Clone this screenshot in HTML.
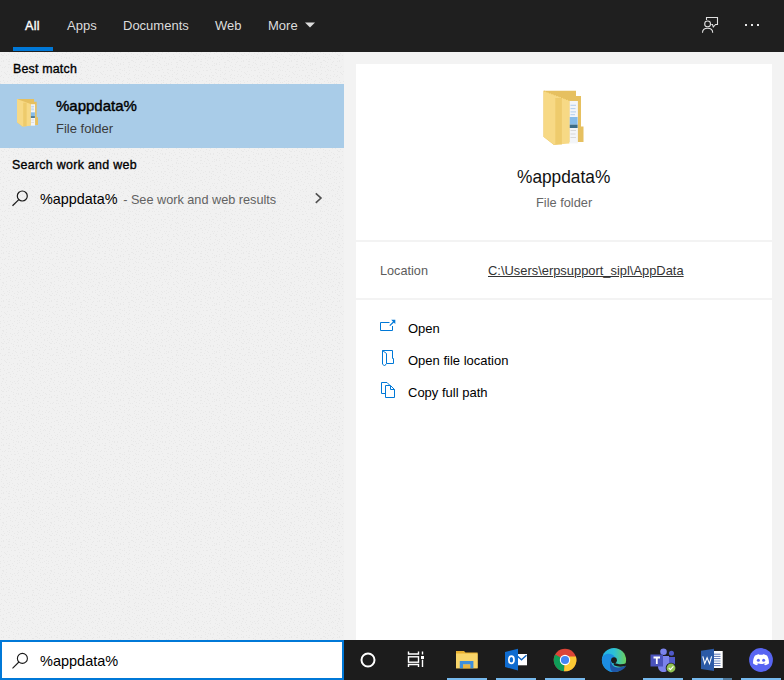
<!DOCTYPE html>
<html><head><meta charset="utf-8">
<style>
*{margin:0;padding:0;box-sizing:border-box}
html,body{width:784px;height:680px;overflow:hidden;background:#f3f3f3;font-family:"Liberation Sans",sans-serif}
.a{position:absolute;white-space:nowrap;line-height:1}
#hdr{position:absolute;left:0;top:0;width:784px;height:52px;background:#1f1f1f}
#left{position:absolute;left:0;top:52px;width:344px;height:588px;background:#efefef}
#gap{position:absolute;left:344px;top:52px;width:440px;height:588px;background:#f3f3f3}
.card{position:absolute;left:356px;width:416px;background:#fff}
#tb{position:absolute;left:0;top:640px;width:784px;height:40px;background:#1c1c1c}
.tab{color:#dcdcdc;font-size:13px}
</style></head><body>
<div id="hdr"></div>
<div id="left"></div>
<svg style="position:absolute;left:0;top:52px" width="344" height="588"><defs><pattern id="nz" width="48" height="48" patternUnits="userSpaceOnUse"><rect width="48" height="48" fill="#f1f1f1"/><path d="M1 2h1v1h-1zM4 1h1v1h-1zM8 2h1v1h-1zM9 0h1v1h-1zM14 1h1v1h-1zM17 2h1v1h-1zM18 0h1v1h-1zM22 1h1v1h-1zM24 0h1v1h-1zM29 2h1v1h-1zM32 0h1v1h-1zM35 1h1v1h-1zM37 2h1v1h-1zM41 2h1v1h-1zM44 0h1v1h-1zM47 0h1v1h-1zM2 3h1v1h-1zM3 3h1v1h-1zM6 3h1v1h-1zM11 3h1v1h-1zM13 4h1v1h-1zM16 5h1v1h-1zM18 5h1v1h-1zM21 5h1v1h-1zM25 4h1v1h-1zM27 5h1v1h-1zM30 4h1v1h-1zM35 4h1v1h-1zM37 5h1v1h-1zM39 5h1v1h-1zM43 4h1v1h-1zM45 5h1v1h-1zM1 6h1v1h-1zM3 8h1v1h-1zM6 7h1v1h-1zM9 7h1v1h-1zM13 6h1v1h-1zM15 8h1v1h-1zM18 6h1v1h-1zM21 6h1v1h-1zM25 7h1v1h-1zM29 7h1v1h-1zM31 6h1v1h-1zM35 8h1v1h-1zM36 8h1v1h-1zM40 7h1v1h-1zM42 7h1v1h-1zM46 6h1v1h-1zM1 9h1v1h-1zM3 9h1v1h-1zM8 9h1v1h-1zM9 9h1v1h-1zM13 10h1v1h-1zM15 11h1v1h-1zM20 9h1v1h-1zM22 11h1v1h-1zM24 11h1v1h-1zM27 10h1v1h-1zM32 10h1v1h-1zM33 10h1v1h-1zM37 9h1v1h-1zM39 10h1v1h-1zM44 10h1v1h-1zM45 9h1v1h-1zM0 13h1v1h-1zM5 14h1v1h-1zM8 12h1v1h-1zM9 12h1v1h-1zM12 13h1v1h-1zM16 12h1v1h-1zM20 13h1v1h-1zM22 13h1v1h-1zM24 12h1v1h-1zM27 12h1v1h-1zM32 14h1v1h-1zM33 12h1v1h-1zM38 13h1v1h-1zM40 14h1v1h-1zM43 12h1v1h-1zM47 13h1v1h-1zM2 15h1v1h-1zM4 15h1v1h-1zM8 15h1v1h-1zM10 15h1v1h-1zM14 15h1v1h-1zM17 15h1v1h-1zM18 17h1v1h-1zM23 17h1v1h-1zM24 17h1v1h-1zM28 16h1v1h-1zM32 15h1v1h-1zM34 15h1v1h-1zM36 15h1v1h-1zM39 17h1v1h-1zM43 15h1v1h-1zM47 17h1v1h-1zM1 19h1v1h-1zM4 20h1v1h-1zM7 19h1v1h-1zM11 18h1v1h-1zM14 18h1v1h-1zM15 18h1v1h-1zM19 20h1v1h-1zM23 20h1v1h-1zM26 18h1v1h-1zM28 18h1v1h-1zM30 20h1v1h-1zM33 18h1v1h-1zM37 19h1v1h-1zM40 18h1v1h-1zM42 18h1v1h-1zM45 19h1v1h-1zM1 23h1v1h-1zM5 21h1v1h-1zM6 22h1v1h-1zM9 22h1v1h-1zM13 23h1v1h-1zM17 23h1v1h-1zM20 23h1v1h-1zM21 23h1v1h-1zM24 21h1v1h-1zM28 22h1v1h-1zM32 22h1v1h-1zM33 21h1v1h-1zM38 23h1v1h-1zM39 22h1v1h-1zM42 23h1v1h-1zM46 22h1v1h-1zM0 24h1v1h-1zM3 25h1v1h-1zM8 25h1v1h-1zM11 24h1v1h-1zM14 26h1v1h-1zM17 24h1v1h-1zM19 25h1v1h-1zM21 26h1v1h-1zM25 24h1v1h-1zM28 24h1v1h-1zM31 26h1v1h-1zM33 26h1v1h-1zM38 25h1v1h-1zM40 26h1v1h-1zM42 26h1v1h-1zM45 24h1v1h-1zM0 29h1v1h-1zM3 28h1v1h-1zM7 29h1v1h-1zM10 28h1v1h-1zM14 29h1v1h-1zM17 28h1v1h-1zM19 28h1v1h-1zM23 27h1v1h-1zM26 29h1v1h-1zM27 28h1v1h-1zM32 27h1v1h-1zM34 27h1v1h-1zM36 29h1v1h-1zM39 28h1v1h-1zM44 29h1v1h-1zM46 28h1v1h-1zM0 31h1v1h-1zM4 30h1v1h-1zM8 32h1v1h-1zM9 32h1v1h-1zM12 31h1v1h-1zM17 31h1v1h-1zM19 30h1v1h-1zM22 31h1v1h-1zM26 31h1v1h-1zM27 32h1v1h-1zM31 30h1v1h-1zM33 31h1v1h-1zM36 32h1v1h-1zM40 30h1v1h-1zM42 30h1v1h-1zM46 31h1v1h-1zM0 35h1v1h-1zM3 34h1v1h-1zM6 33h1v1h-1zM10 34h1v1h-1zM13 33h1v1h-1zM16 34h1v1h-1zM20 35h1v1h-1zM22 35h1v1h-1zM25 35h1v1h-1zM29 34h1v1h-1zM31 33h1v1h-1zM33 34h1v1h-1zM38 33h1v1h-1zM41 35h1v1h-1zM43 35h1v1h-1zM46 34h1v1h-1zM2 38h1v1h-1zM3 38h1v1h-1zM6 37h1v1h-1zM10 36h1v1h-1zM12 37h1v1h-1zM15 36h1v1h-1zM18 38h1v1h-1zM21 37h1v1h-1zM24 38h1v1h-1zM29 38h1v1h-1zM32 37h1v1h-1zM33 38h1v1h-1zM36 36h1v1h-1zM40 37h1v1h-1zM42 38h1v1h-1zM45 37h1v1h-1zM2 41h1v1h-1zM3 39h1v1h-1zM6 40h1v1h-1zM10 41h1v1h-1zM14 41h1v1h-1zM17 41h1v1h-1zM18 40h1v1h-1zM23 39h1v1h-1zM24 40h1v1h-1zM29 40h1v1h-1zM30 40h1v1h-1zM34 39h1v1h-1zM38 39h1v1h-1zM40 41h1v1h-1zM44 41h1v1h-1zM47 40h1v1h-1zM1 43h1v1h-1zM5 42h1v1h-1zM6 44h1v1h-1zM11 44h1v1h-1zM12 42h1v1h-1zM15 43h1v1h-1zM18 43h1v1h-1zM23 43h1v1h-1zM25 44h1v1h-1zM27 43h1v1h-1zM32 42h1v1h-1zM33 43h1v1h-1zM37 44h1v1h-1zM40 43h1v1h-1zM43 42h1v1h-1zM45 42h1v1h-1zM1 45h1v1h-1zM3 47h1v1h-1zM7 47h1v1h-1zM9 46h1v1h-1zM12 47h1v1h-1zM17 47h1v1h-1zM20 47h1v1h-1zM22 46h1v1h-1zM26 47h1v1h-1zM27 45h1v1h-1zM31 47h1v1h-1zM35 46h1v1h-1zM38 47h1v1h-1zM41 45h1v1h-1zM44 47h1v1h-1zM47 46h1v1h-1z" fill="#e8e8e8"/></pattern></defs><rect width="344" height="588" fill="url(#nz)"/></svg>
<div id="gap"></div>
<div class="card" style="top:64px;height:176px"></div>
<div class="card" style="top:242px;height:56px"></div>
<div class="card" style="top:300px;height:340px"></div>
<div id="tb"></div>

<!-- header tabs -->
<div class="a tab" style="left:25px;top:20px;font-size:12.6px;-webkit-text-stroke:0.35px #fff;letter-spacing:0.3px;color:#fff">All</div>
<div style="position:absolute;left:13px;top:47px;width:40px;height:4px;background:#0078d7"></div>
<div class="a tab" style="left:67px;top:19px">Apps</div>
<div class="a tab" style="left:123px;top:19px">Documents</div>
<div class="a tab" style="left:215px;top:19px">Web</div>
<div class="a tab" style="left:268px;top:19px">More</div>
<svg style="position:absolute;left:304px;top:22px" width="12" height="6"><path d="M1 0.5H11L6 5.5Z" fill="#dcdcdc"/></svg>


<!-- header right icons -->
<svg style="position:absolute;left:698px;top:12px" width="26" height="26" viewBox="698 12 26 26" fill="none" stroke="#e0e0e0" stroke-width="1.1">
<path d="M706.5 20V17.5H717.5V24.5H715.5L713.3 27L712.5 24.5H711.3"/>
<circle cx="707.6" cy="23.9" r="2.9"/>
<path d="M702.5 32.8C702.5 30 704.7 28.3 707.6 28.3S712.7 30 712.7 32.8"/>
</svg>
<div style="position:absolute;left:745px;top:24px;width:2px;height:2px;background:#e6e6e6"></div>
<div style="position:absolute;left:751px;top:24px;width:2px;height:2px;background:#e6e6e6"></div>
<div style="position:absolute;left:757px;top:24px;width:2px;height:2px;background:#e6e6e6"></div>

<!-- left panel -->
<div class="a" style="left:13px;top:63px;font-size:12.4px;-webkit-text-stroke:0.35px #000;letter-spacing:0.2px;color:#000">Best match</div>
<div style="position:absolute;left:0;top:84px;width:344px;height:64px;background:#a9cce8"></div>
<svg style="position:absolute;left:17px;top:99px" width="21" height="27.5" viewBox="543.5 90.7 40 54.3" preserveAspectRatio="none">
<path d="M543.5 90.7H576V95.9H581V126.5H583.5V142H569L554 145L543.5 136.8Z" fill="#e6c060"/>
<path d="M569.4 101H577.9V143.4H569.4Z" fill="#f3f5f8"/>
<path d="M570.5 105.3H576M570.5 108.6H575.5M570.5 111.9H576" stroke="#a9c9ec" stroke-width="1.5"/>
<path d="M569.6 117H577.6V124.6H569.6Z" fill="#86bbe8"/>
<path d="M569.6 124.6H577.6V128H569.6Z" fill="#3d6c86"/>
<path d="M570.5 132H576M570.5 137H576" stroke="#d5d5d5" stroke-width="1.5"/>
<path d="M543.5 90.7L569.4 100.6V143.4L553.9 144.8L543.5 136.8Z" fill="#f7d985"/>
<path d="M558.6 98V144.5" stroke="#eecb6c" stroke-width="6.6"/>
</svg>
<div class="a" style="left:56px;top:97.5px;font-size:15px;-webkit-text-stroke:0.4px #000;color:#000">%appdata%</div>
<div class="a" style="left:56px;top:122px;font-size:13px;color:#3a3a3a">File folder</div>

<div class="a" style="left:12px;top:159px;font-size:12.4px;-webkit-text-stroke:0.35px #000;letter-spacing:0.3px;color:#000">Search work and web</div>
<svg style="position:absolute;left:10px;top:189px" width="20" height="20" viewBox="0 0 20 20" fill="none" stroke="#1a1a1a" stroke-width="1.2">
<circle cx="12.3" cy="7" r="5"/><path d="M8.8 10.6L2.5 16.8"/>
</svg>
<div class="a" style="left:40px;top:192px;font-size:14.4px;color:#000">%appdata%<span style="font-size:12.7px;color:#626262;margin-left:2px"> - See work and web results</span></div>
<svg style="position:absolute;left:310px;top:188px" width="16" height="20" viewBox="310 188 16 20" fill="none" stroke="#505050" stroke-width="1.6">
<path d="M315.8 193.3L321 198.1L315.8 202.9"/>
</svg>

<!-- right card 1 -->
<svg style="position:absolute;left:536px;top:86px" width="56" height="64" viewBox="536 86 56 64">
<path d="M543.5 90.7H576V95.9H581V126.5H583.5V142H569L554 145L543.5 136.8Z" fill="#e6c060"/>
<path d="M569.4 101H577.9V143.4H569.4Z" fill="#f3f5f8"/>
<path d="M570.5 105.3H576M570.5 108.6H575.5M570.5 111.9H576M570.5 114.7H575" stroke="#a9c9ec" stroke-width="0.9"/>
<path d="M569.6 117H577.6V124.6H569.6Z" fill="#86bbe8"/>
<path d="M569.6 124.6H577.6V128H569.6Z" fill="#3d6c86"/>
<path d="M570.5 130.5H576M570.5 134H575.5M570.5 137.5H576" stroke="#d5d5d5" stroke-width="0.9"/>
<path d="M543.5 90.7L569.4 100.6V143.4L553.9 144.8L543.5 136.8Z" fill="#f7d985"/>
<path d="M558.6 98V144.5" stroke="#eecb6c" stroke-width="6.6"/>
<path d="M544 91L569 100.5" stroke="#e2b94f" stroke-width="0.8" stroke-dasharray="1 1.6"/>
</svg>
<div class="a" style="left:517px;top:168px;font-size:18.5px;color:#111;transform:scaleX(0.935);transform-origin:0 0">%appdata%</div>
<div class="a" style="left:536px;top:197px;font-size:12.8px;color:#666">File folder</div>

<!-- right card 2 -->
<div class="a" style="left:380px;top:265px;font-size:12.7px;color:#5c5c5c">Location</div>
<div class="a" style="left:488px;top:265px;font-size:12.9px;color:#333;text-decoration:underline">C:\Users\erpsupport_sipl\AppData</div>

<!-- right card 3 actions -->
<svg style="position:absolute;left:374px;top:314px" width="26" height="22" viewBox="374 314 26 22" fill="none" stroke="#0078d7" stroke-width="1">
<path d="M389.5 322.5H380.5V330.5H392.5V326"/><path d="M389.8 325.7L394 321.5" stroke-width="1.2"/><path d="M391.2 319.8H395.3V323.9Z" fill="#0078d7" stroke="none"/>
</svg>
<div class="a" style="left:408px;top:322px;font-size:13px;color:#000">Open</div>
<svg style="position:absolute;left:374px;top:344px" width="26" height="26" viewBox="374 344 26 26" fill="none" stroke="#0078d7" stroke-width="1">
<path d="M382.5 350.5H392.5V358.5H393.5V363.5H386.5"/><path d="M382.5 350.5L386.5 353.5V363.5L384.5 366L382.5 364Z"/>
</svg>
<div class="a" style="left:408px;top:354px;font-size:13px;color:#000">Open file location</div>
<svg style="position:absolute;left:374px;top:376px" width="26" height="26" viewBox="374 376 26 26" fill="none" stroke="#0078d7" stroke-width="1">
<path d="M385.5 393.5H381.5V382.5H387L389.5 385"/><path d="M385.5 385.5H390.5L394.5 389.5V397.5H385.5Z"/><path d="M390.5 385.5V389.5H394.5"/>
</svg>
<div class="a" style="left:408px;top:386px;font-size:13px;color:#000">Copy full path</div>

<!-- search box -->
<div style="position:absolute;left:0;top:640px;width:344px;height:40px;background:#fff;border:2px solid #0078d7"></div>
<svg style="position:absolute;left:10px;top:650.7px" width="20" height="20" viewBox="0 0 20 20" fill="none" stroke="#1a1a1a" stroke-width="1.1">
<circle cx="12.4" cy="7.4" r="5"/><path d="M8.9 11L2.5 17.3"/>
</svg>
<div class="a" style="left:40px;top:654px;font-size:14.5px;color:#000">%appdata%</div>

<!-- taskbar icons -->
<svg style="position:absolute;left:360px;top:652px" width="16" height="16" viewBox="0 0 16 16" fill="none" stroke="#fff" stroke-width="2"><circle cx="8" cy="8" r="6.5"/></svg>


<!-- task view -->
<svg style="position:absolute;left:400px;top:645px" width="30" height="27" viewBox="400 645 30 27" fill="none" stroke="#fff" stroke-width="1.4">
<path d="M408.5 651.5V654H418.5V651.5"/>
<rect x="408.5" y="656.8" width="10" height="5.4"/>
<path d="M408.5 667V664.5H418.5V667"/>
<path d="M422.5 651.5V654.5M422.5 659.8V667"/>
<rect x="421" y="656" width="3" height="3" fill="#fff" stroke="none"/>
</svg>
<!-- explorer -->
<svg style="position:absolute;left:440px;top:640px" width="100" height="40" viewBox="440 640 100 40">
<path d="M456 651H464L465.5 652.5H477.6V668.3H456Z" fill="#e9b131"/>
<path d="M456 653.5H477.6V668.3H456Z" fill="#f8d56a"/>
<path d="M459.8 661H473.4V668.3H470.2V664.5H463V668.3H459.8Z" fill="#3d8fdd"/>
<path d="M463 664.5H470.2V668.3H463Z" fill="#e8b543"/>
</svg>
<!-- outlook -->
<svg style="position:absolute;left:440px;top:640px" width="100" height="40" viewBox="440 640 100 40">
<path d="M516 654H527V665.3H516Z" fill="#fff"/>
<path d="M516.5 655.2L521.5 659.8L526.5 655.2" fill="none" stroke="#0f64c0" stroke-width="1.3"/>
<path d="M505 652L518 648.7V670.6L505 667Z" fill="#0f6cd0"/>
<ellipse cx="511.4" cy="659.8" rx="2.6" ry="3.6" fill="none" stroke="#fff" stroke-width="1.7"/>
</svg>
<!-- chrome -->
<svg style="position:absolute;left:553px;top:648px" width="24" height="24" viewBox="0 0 24 24">
<circle cx="12" cy="12" r="11.3" fill="#db4437"/>
<path d="M12 12L2.2 6.4A11.3 11.3 0 0 0 11 23.3Z" fill="#0f9d58"/>
<path d="M12 12L11 23.3A11.3 11.3 0 0 0 22.9 8.5L12 8.5Z" fill="#fcc934"/>
<circle cx="12" cy="12" r="5.2" fill="#fff"/>
<circle cx="12" cy="12" r="4.1" fill="#4285f4"/>
</svg>
<!-- edge -->
<svg style="position:absolute;left:596px;top:644px" width="36" height="32" viewBox="596 644 36 32">
<defs><linearGradient id="eg" x1="0" y1="0" x2="1" y2="0"><stop offset="0" stop-color="#22b2e6"/><stop offset="0.5" stop-color="#2cc0d8"/><stop offset="1" stop-color="#6bd05a"/></linearGradient></defs>
<circle cx="614" cy="660" r="12.1" fill="url(#eg)"/>
<path d="M601.9 660C601.9 655 607 652.5 612 654.5C614.5 655.5 615.5 657.5 615.5 659.5L611 662C609.5 664 610 668 613 672A12.1 12.1 0 0 1 601.9 660Z" fill="#1c8de2"/>
<ellipse cx="614" cy="660.3" rx="2.9" ry="3.1" fill="#1c1c1c"/>
<path d="M614.5 662.8C618 664.6 622 664.8 626.5 663.2L626.5 665.4C622 667.2 618 667.2 613.5 665Z" fill="#1c1c1c"/>
<path d="M611 660.5C611.2 665 614 667.4 618 667.4C621 667.4 624 666.8 626.2 665.6C624.5 669.5 619.5 672.1 614 672.1C612.3 672.1 611.2 671 610.6 669.2C609.6 666.5 609.8 663 611 660.5Z" fill="#1f56a8"/>
</svg>
<!-- teams -->
<svg style="position:absolute;left:650px;top:648px" width="28" height="26" viewBox="0 0 28 26">
<circle cx="13.5" cy="3.8" r="3.3" fill="#7b83eb"/>
<circle cx="21.5" cy="5.2" r="2.5" fill="#5059c9"/>
<path d="M17 9H25V16C25 19 23 20.5 21 20.5S17 19 17 16Z" fill="#5059c9"/>
<path d="M8 8H19V18C19 22 16.5 24 13.5 24S8 22 8 18Z" fill="#7b83eb"/>
<path d="M0.5 6.5H13V18.5H0.5Z" fill="#4b53bc"/>
<path d="M3.5 9.5H10M6.8 9.5V16" stroke="#fff" stroke-width="1.8" fill="none"/>
<circle cx="21" cy="20" r="5.3" fill="#1f1f1f"/>
<circle cx="21" cy="20" r="4.4" fill="#92c353"/>
<path d="M18.8 20L20.4 21.6L23.4 18.4" stroke="#fff" stroke-width="1.2" fill="none"/>
</svg>
<!-- word -->
<svg style="position:absolute;left:696px;top:644px" width="34" height="32" viewBox="696 644 34 32">
<path d="M713 651H722.7V668H713Z" fill="#fff"/>
<path d="M714 654.2H720.5M714 656.4H720.5M714 658.6H720.5M714 663.4H720.5M714 665.6H720.5" stroke="#2d4fa0" stroke-width="0.8"/>
<path d="M714 661H720.5" stroke="#9fb7d8" stroke-width="1.4"/>
<path d="M701 650.8L714 648.7V670.9L701 669Z" fill="#2b5aa6"/>
<path d="M702.8 656.3L704.7 663.6L707.1 657.8L709.5 663.6L711.6 656.3" stroke="#fff" stroke-width="1.1" fill="none"/>
</svg>
<!-- discord -->
<svg style="position:absolute;left:749px;top:648px" width="24" height="24" viewBox="0 0 24 24">
<circle cx="12" cy="12" r="11.9" fill="#5865f2"/>
<g transform="translate(12 11.3) scale(1.2 1.12) translate(-12 -11.3)">
<path d="M7 8C8.5 7 10 6.8 10.5 6.8L10.8 7.4C11.6 7.3 12.4 7.3 13.2 7.4L13.5 6.8C14 6.8 15.5 7 17 8C18.2 10 18.8 12.5 18.6 15C17.5 15.9 16.3 16.4 15.3 16.6L14.6 15.5C15.2 15.3 15.7 15 16.1 14.7C14 15.8 10 15.8 7.9 14.7C8.3 15 8.8 15.3 9.4 15.5L8.7 16.6C7.7 16.4 6.5 15.9 5.4 15C5.2 12.5 5.8 10 7 8Z" fill="#fff"/>
<ellipse cx="9.8" cy="12.1" rx="1.25" ry="1.4" fill="#5865f2"/>
<ellipse cx="14.2" cy="12.1" rx="1.25" ry="1.4" fill="#5865f2"/>
</g>
</svg>
<!-- running indicators -->
<div style="position:absolute;left:447px;top:678px;width:40px;height:2px;background:#76b9ed"></div>
<div style="position:absolute;left:496px;top:678px;width:40px;height:2px;background:#76b9ed"></div>
<div style="position:absolute;left:545px;top:678px;width:40px;height:2px;background:#76b9ed"></div>
<div style="position:absolute;left:643px;top:678px;width:40px;height:2px;background:#76b9ed"></div>
<div style="position:absolute;left:692px;top:678px;width:31px;height:2px;background:#76b9ed"></div><div style="position:absolute;left:723px;top:678px;width:9px;height:2px;background:#4f7a9c"></div>
<div style="position:absolute;left:741px;top:678px;width:40px;height:2px;background:#76b9ed"></div>

</body></html>
